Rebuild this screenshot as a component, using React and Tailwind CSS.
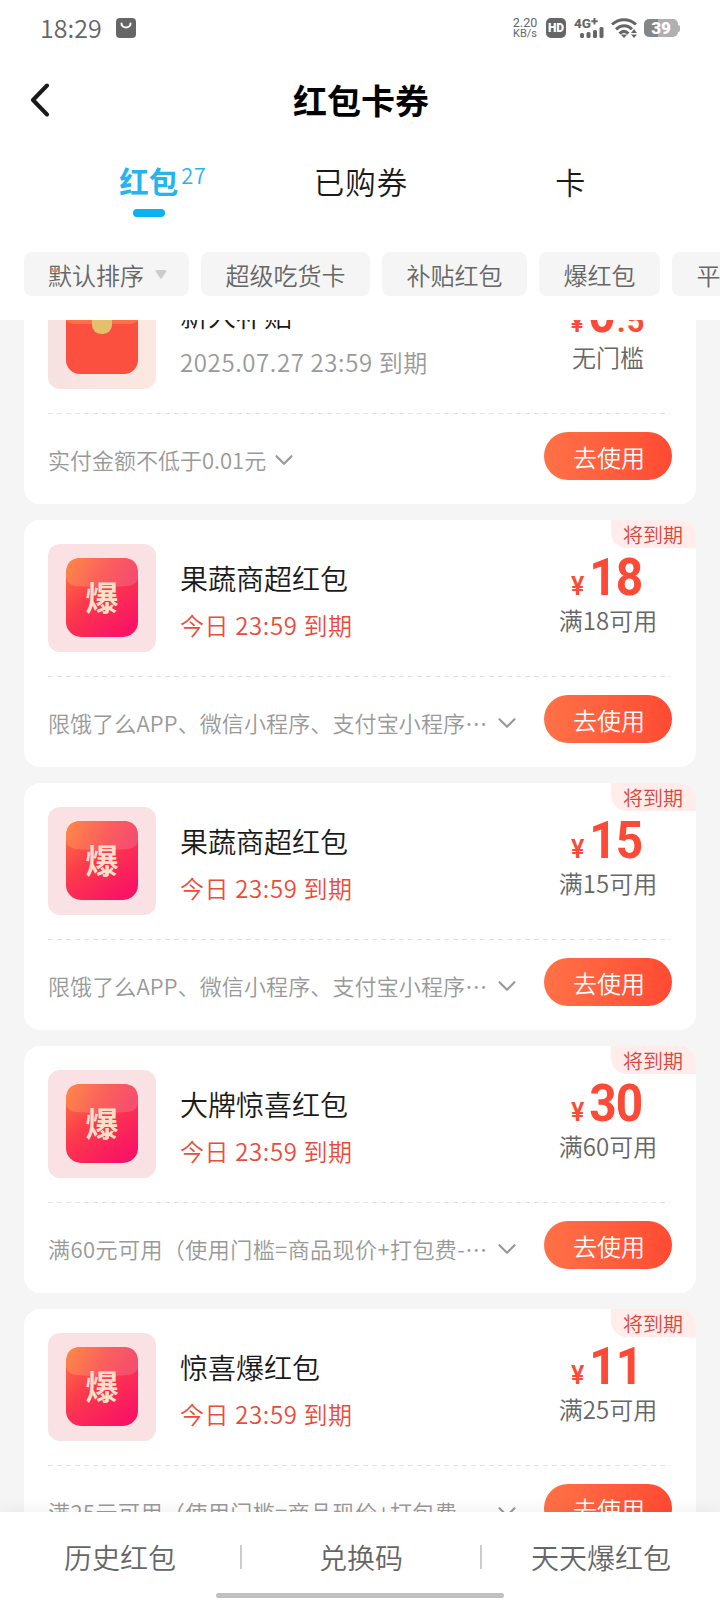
import { ChevronDown } from "lucide-react";

const FILTERS = [
  { label: "默认排序", width: "w-[165px]", sort: true },
  { label: "超级吃货卡", width: "w-[169px]" },
  { label: "补贴红包", width: "w-[145px]" },
  { label: "爆红包", width: "w-[121px]" },
  { label: "平台红包", width: "w-[145px]" },
];

const COUPONS = [
  {
    title: "新人补贴",
    date: "2025.07.27 23:59 到期",
    amount: "0",
    decimal: ".5",
    limit: "无门槛",
    note: "实付金额不低于0.01元",
    short: true,
  },
  {
    title: "果蔬商超红包",
    date: "今日 23:59 到期",
    amount: "18",
    limit: "满18可用",
    note: "限饿了么APP、微信小程序、支付宝小程序⋯",
    noteTracking: "tracking-[0.12px]",
    expiring: true,
  },
  {
    title: "果蔬商超红包",
    date: "今日 23:59 到期",
    amount: "15",
    limit: "满15可用",
    note: "限饿了么APP、微信小程序、支付宝小程序⋯",
    noteTracking: "tracking-[0.12px]",
    expiring: true,
  },
  {
    title: "大牌惊喜红包",
    date: "今日 23:59 到期",
    amount: "30",
    limit: "满60可用",
    note: "满60元可用（使用门槛=商品现价+打包费-⋯",
    noteTracking: "tracking-[0.45px]",
    expiring: true,
  },
  {
    title: "惊喜爆红包",
    date: "今日 23:59 到期",
    amount: "11",
    limit: "满25可用",
    note: "满25元可用（使用门槛=商品现价+打包费-⋯",
    noteTracking: "tracking-[0.45px]",
    expiring: true,
  },
];

function StatusBar() {
  return (
    <div className="flex h-14 items-center justify-between px-10 text-[#666]">
      <div className="flex items-center">
        <span className="-mt-[2px] w-[61px] text-[25px] font-[350] leading-none">18:29</span>
        <svg width="20" height="20" viewBox="0 0 20 20" className="ml-[15px]">
          <rect width="20" height="20" rx="4" fill="#666" />
          <path d="M5.5 5.5a4.5 4 0 0 0 9 0" fill="none" stroke="#fff" strokeWidth="2" strokeLinecap="round" />
        </svg>
      </div>
      <div className="flex items-center">
        <div className="mr-[9px] flex w-6 flex-col items-center whitespace-nowrap font-[Roboto] text-[11px] leading-[11px]">
          <span className="text-[12.5px]">2.20</span>
          <span className="text-[11px]">KB/s</span>
        </div>
        <div className="flex h-5 w-5 items-center justify-center rounded-[5px] bg-[#666] font-[Roboto] text-[12px] font-black leading-none text-white">
          HD
        </div>
        <svg width="30" height="20" viewBox="0 0 30 20" className="ml-2" fill="#666">
          <text x="0" y="10" fontFamily="Roboto" fontSize="13.5" fontWeight="800" textLength="17" lengthAdjust="spacingAndGlyphs">4G</text>
          <path d="M19.500 0h2v2.200h2.200v2h-2.200v2.200h-2V4.200h-2.200v-2h2.200z" />
          <rect x="6" y="15" width="4" height="5" rx="1.500" />
          <rect x="12.500" y="14" width="4" height="6" rx="1.500" />
          <rect x="19" y="12" width="4" height="8" rx="1.500" />
          <rect x="25.500" y="9" width="4" height="11" rx="1.500" />
        </svg>
        <svg width="27" height="20" viewBox="0 0 27 20" className="ml-[7px]" fill="none" stroke="#666" strokeWidth="3">
          <path d="M1 6.500C8 0 18 0 25 6.500" />
          <path d="M5 11.300C10 6.500 16.500 6.500 21 11.300" />
          <path d="M8.500 15.500C11.500 12.700 14.500 12.700 17.500 15.500" />
          <path d="M9.800 16.500h6.400L13 20z" fill="#666" stroke="none" />
          <path d="M20 15l3-4 3 4zM20 16.500h6l-3 3.500z" fill="#666" stroke="none" />
        </svg>
        <div className="ml-[6px] flex items-center">
          <div className="flex h-[18px] w-[34px] items-center justify-center rounded-[5px] bg-linear-to-r from-[#868686] from-40% to-[#b0b0b0] to-40% pt-px font-[Roboto] text-[17px] font-black leading-none text-white">
            39
          </div>
          <div className="h-[7px] w-[2px] rounded-r bg-[#b0b0b0]" />
        </div>
      </div>
    </div>
  );
}

function Header() {
  return (
    <header className="h-80 shrink-0 overflow-hidden bg-white">
      <StatusBar />
      <div className="grid h-22 grid-cols-[80px_1fr_80px] items-center">
        <svg width="20" height="34" viewBox="0 0 20 34" className="ml-[30px]">
          <path d="M17 2.500 3 17l14 14.500" fill="none" stroke="#1a1a1a" strokeWidth="4" strokeLinecap="round" strokeLinejoin="round" />
        </svg>
        <h1 className="pl-[2px] text-center text-[34px] font-bold leading-none text-black">红包卡券</h1>
      </div>
      <nav className="grid grid-cols-3 px-[43px] text-center text-[30px] font-[350] leading-none text-[#1a1a1a]">
        <div className="flex h-[73px] flex-col items-center pt-[22px]">
          <div className="relative text-[29.5px] font-bold text-[#25b4ee]">
            红包
            <span className="absolute -top-[3px] left-full ml-[3px] text-[22px] font-[350] tracking-[0.5px]">27</span>
          </div>
          <div className="mt-[13px] h-2 w-8 rounded-full bg-[#09b2f0]" />
        </div>
        <div className="pl-[2px] pt-[22px] text-[30.5px] tracking-[1px]">已购券</div>
        <div className="pr-[2px] pt-[22px]">卡</div>
      </nav>
      <div className="mt-[35px] flex gap-3 pl-6">
        {FILTERS.map((f) => (
          <button
            key={f.label}
            className={`flex h-11 shrink-0 items-center justify-center rounded-lg bg-[#f5f5f5] pt-px text-2xl font-[350] leading-none text-[#666] ${f.width}`}
          >
            {f.label}
            {f.sort && (
              <svg width="12" height="9" viewBox="0 0 12 9" className="-mr-[2px] ml-[11px]" fill="#ccc">
                <path d="M2 0h8q2 0 1 2L7 8q-1 1-2 0L1 2Q0 0 2 0z" />
              </svg>
            )}
          </button>
        ))}
      </div>
    </header>
  );
}

function BurstIcon() {
  return (
    <div className="flex h-27 w-27 justify-center rounded-xl bg-[#fae2e4] pt-[14px]">
      <svg width="72" height="79" viewBox="0 0 72 79">
        <defs>
          <linearGradient id="burst" x1="0" y1="0" x2="0.7" y2="1">
            <stop offset="0" stopColor="#ff7a40" />
            <stop offset="0.5" stopColor="#fc3a4c" />
            <stop offset="1" stopColor="#f91464" />
          </linearGradient>
          <linearGradient id="flap" x1="0" y1="0" x2="1" y2="0.2">
            <stop offset="0" stopColor="#fd8a47" />
            <stop offset="0.6" stopColor="#fb5f5c" />
            <stop offset="1" stopColor="#f64e6e" />
          </linearGradient>
        </defs>
        <rect width="72" height="79" rx="15" fill="url(#burst)" />
        <path d="M0 15Q0 0 15 0h42q15 0 15 15v4q-1 8-10 9-26 2-52 0-9-1-10-9z" fill="url(#flap)" />
        <text
          x="19.500"
          y="52.500"
          fontFamily="Noto Sans CJK SC"
          fontSize="34"
          fontWeight="700"
          fill="#ffdfc6"
          textLength="33"
          lengthAdjust="spacingAndGlyphs"
        >
          爆
        </text>
      </svg>
    </div>
  );
}

function EnvelopeIcon() {
  return (
    <div className="flex h-27 w-27 justify-center rounded-xl bg-linear-to-r from-[#f7e2e2] to-[#fbe8e0] pt-[14px]">
      <svg width="72" height="79" viewBox="0 0 72 79">
        <rect width="72" height="79" rx="14" fill="#fb4f3f" />
        <path d="M0 14Q0 0 14 0h44q14 0 14 14v12q-4 3-10 3H10q-6 0-10-3z" fill="#fe7147" />
        <rect x="26" y="12" width="20" height="27" rx="9" fill="#e3c06c" />
      </svg>
    </div>
  );
}

function CouponCard({ coupon }) {
  return (
    <article className="relative h-[247px] shrink-0 overflow-hidden rounded-2xl bg-white px-6 pt-6 font-[350]">
      {coupon.expiring && (
        <div className="absolute right-0 top-0 flex h-7 w-[85px] items-center justify-center rounded-bl-2xl bg-[#ffeceb] pr-px pt-[2px] text-[20px] leading-none text-[#d9463c]">
          将到期
        </div>
      )}
      <div className="flex h-[132px]">
        {coupon.expiring ? <BurstIcon /> : <EnvelopeIcon />}
        <div className="ml-6 flex-1 pt-5">
          <h2 className="text-[28px] leading-7 text-[#1a1a1a]">{coupon.title}</h2>
          <p
            className={`mt-[21px] text-2xl leading-6 tracking-[0.62px] ${
              coupon.expiring ? "text-[#eb4b3a]" : "text-[#999]"
            }`}
          >
            {coupon.date}
          </p>
        </div>
        <div className="flex w-32 flex-col items-center">
          <div className="mt-[11px] flex h-[46px] items-baseline justify-center font-[Roboto] font-bold leading-[46px] text-[#fb4b36]">
            <span className="mr-[3px] text-[25px] font-semibold">¥</span>
            <span className="scale-x-[0.92] text-[52px] tracking-[-1px]">{coupon.amount}</span>
            {coupon.decimal && <span className="ml-px text-[31px] tracking-[1px]">{coupon.decimal}</span>}
          </div>
          <div className="mt-[7px] text-2xl leading-6 text-[#666]">{coupon.limit}</div>
        </div>
      </div>
      <div className="mr-[2px] h-px bg-[repeating-linear-gradient(90deg,#e2e2e2_0_5px,transparent_5px_9px)]" />
      <div className="flex items-start pt-[18px]">
        <div className="flex flex-1 items-center pt-[13px] text-[22px] leading-[22px] text-[#999]">
          <span className={coupon.short ? "-mt-[2px]" : `-mt-[2px] w-[443px] whitespace-nowrap ${coupon.noteTracking}`}>
            {coupon.note}
          </span>
          <ChevronDown size={30} strokeWidth={1.7} className={coupon.short ? "ml-[3px]" : "ml-px"} />
        </div>
        <button className="flex h-12 w-32 items-center justify-center rounded-full bg-linear-to-r from-[#ff7147] to-[#ff4a33] pl-[2px] pt-[2px] text-2xl leading-none text-white">
          去使用
        </button>
      </div>
    </article>
  );
}

function BottomBar() {
  return (
    <footer className="relative flex h-22 shrink-0 flex-col items-center bg-white shadow-[0_-2px_16px_rgba(0,0,0,0.06)]">
      <div className="grid h-[81px] w-full grid-cols-[240px_242px_238px] items-center pt-2 text-center text-[28px] font-[350] leading-none text-[#666]">
        <span>历史红包</span>
        <span className="flex h-6 items-center justify-center border-x-2 border-[#ccc]">兑换码</span>
        <span>天天爆红包</span>
      </div>
      <div className="h-[5px] w-72 rounded-full bg-[#c0c0c0]" />
    </footer>
  );
}

export default function App() {
  return (
    <div className="flex h-[1600px] w-[720px] flex-col overflow-hidden bg-[#f5f5f5] font-['Noto_Sans_CJK_SC',sans-serif]">
      <Header />
      {/* The list is scrolled a little, so the first card is cut by the header. */}
      <main className="min-h-0 flex-1 overflow-hidden px-6">
        <div className="-mt-[63px] flex flex-col gap-4">
          {COUPONS.map((coupon, i) => (
            <CouponCard key={i} coupon={coupon} />
          ))}
        </div>
      </main>
      <BottomBar />
    </div>
  );
}
